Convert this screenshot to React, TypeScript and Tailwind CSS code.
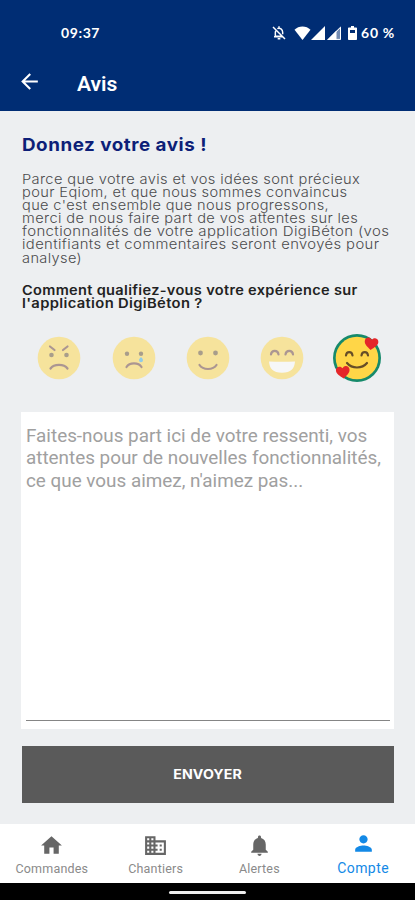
import { useState } from "react"
import type { ReactNode } from "react"
import clsx from "clsx"
import { MdArrowBack, MdBusiness, MdHome, MdNotifications, MdPerson } from "react-icons/md"

// Inter is narrower than the brand typeface, so each line is widened a little
const INTRO = [
  { text: "Parce que votre avis et vos idées sont précieux", stretch: "scale-x-[1.083]" },
  { text: "pour Eqiom, et que nous sommes convaincus", stretch: "scale-x-[1.083]" },
  { text: "que c'est ensemble que nous progressons,", stretch: "scale-x-[1.077]" },
  { text: "merci de nous faire part de vos attentes sur les", stretch: "scale-x-[1.083]" },
  { text: "fonctionnalités de votre application DigiBéton (vos", stretch: "scale-x-[1.108]" },
  { text: "identifiants et commentaires seront envoyés pour", stretch: "scale-x-[1.097]" },
  { text: "analyse)", stretch: "scale-x-[1.08]" },
]

const QUESTION = [
  { text: "Comment qualifiez-vous votre expérience sur", stretch: "scale-x-[1.118]" },
  { text: "l'application DigiBéton ?", stretch: "scale-x-[1.135]" },
]

const TABS = [
  { label: "Commandes", Icon: MdHome },
  { label: "Chantiers", Icon: MdBusiness },
  { label: "Alertes", Icon: MdNotifications },
  { label: "Compte", Icon: MdPerson },
]

const HEART = "M0 5.5C-3 3-6.2 .8-6.2-2.2C-6.2-4.3-4.8-5.6-3-5.6C-1.7-5.6-.6-4.9 0-3.8C.6-4.9 1.7-5.6 3-5.6C4.8-5.6 6.2-4.3 6.2-2.2C6.2 .8 3 3 0 5.5Z"

const FACES: { name: string; drawing: ReactNode }[] = [
  {
    name: "En colère",
    drawing: (
      <>
        <path d="M-9-11.5L-4.5-8M8.5-11.5L4-8" />
        <circle cx="-7.5" cy="-3" r="2.3" fill="#664E27" stroke="none" />
        <circle cx="7.5" cy="-3" r="2.3" fill="#664E27" stroke="none" />
        <path d="M-8.5 10.5C-5 5.6 5 5.6 8.5 10.5" />
      </>
    ),
  },
  {
    name: "Triste",
    drawing: (
      <>
        <circle cx="-7" cy="-4.3" r="2.2" fill="#664E27" stroke="none" />
        <circle cx="7" cy="-4.3" r="2.2" fill="#664E27" stroke="none" />
        <path d="M-7.5 9C-4.5 4.2 4.5 4.2 7.5 9" />
        <path d="M7-1C8.3 .6 9 1.3 9 2.3A2 2 0 0 1 5 2.3C5 1.3 5.7 .6 7-1Z" fill="#3AAADD" stroke="none" />
      </>
    ),
  },
  {
    name: "Content",
    drawing: (
      <>
        <circle cx="-7.5" cy="-5" r="2.4" fill="#664E27" stroke="none" />
        <circle cx="7.5" cy="-5" r="2.4" fill="#664E27" stroke="none" />
        <path d="M-8.5 7C-5 12.3 5 12.3 8.5 7" />
      </>
    ),
  },
  {
    name: "Très content",
    drawing: (
      <>
        <path d="M-11-3.5C-10.5-8.3-4-8.3-3.5-3.5M3.5-3.5C4-8.3 10.5-8.3 11-3.5" />
        <path d="M-13 3.5Q0 4 13 3.5C12.5 10.5 9 14.800 0 14.800S-12.5 10.5-13 3.5Z" fill="#fff" stroke="none" />
      </>
    ),
  },
  {
    name: "Ravi",
    drawing: (
      <>
        <path d="M-11-2.5C-10.5-7-5-7-4.5-2.5M4.5-2.5C5-7 10.5-7 11-2.5" />
        <path d="M-10 5C-5 11 5 11 10 5" />
        <path d={HEART} transform="translate(14.3 -14) rotate(6) scale(1.1)" fill="#E52629" stroke="none" />
        <path d={HEART} transform="translate(-14 14.5) rotate(-6) scale(1.1)" fill="#E52629" stroke="none" />
      </>
    ),
  },
]

function StatusBar() {
  return (
    <div className="flex h-[65px] items-end justify-between pr-5 pl-[61px] font-['Lato',sans-serif] text-[14px] leading-4 font-bold text-white">
      <span className="mb-[24px] tracking-[0.6px]">09:37</span>
      <div className="mb-[24px] flex items-center">
        <svg className="mr-[7px] h-4 w-4" viewBox="0 0 24 24" fill="none" stroke="currentColor" strokeWidth="2.2">
          <path d="M3 3l18 18M7.5 8C6.8 9 6.5 10 6.5 11.500V17H17M4.500 17.500H17M9.500 5.500C13.500 3.500 17.500 6.500 17.500 11V14M12 2v3M10 20.500h4" />
        </svg>
        <svg className="h-[14px] w-[17px]" viewBox="0 0 17 14" fill="currentColor">
          <path d="M8.500 14L.5 3.800C4.500-.7 12.500-.7 16.500 3.800Z" />
        </svg>
        <svg className="h-[14px] w-[14px]" viewBox="0 0 14 14" fill="currentColor">
          <path d="M0 14L14 0V14Z" />
        </svg>
        <svg className="ml-[2px] h-[14px] w-[14px]" viewBox="0 0 14 14" fill="currentColor">
          <path d="M0 14L14 0V14Z" opacity="0.45" />
          <path d="M0 14L9.500 4.500V14Z" />
          <path d="M1.500 13.400L13.500 1.300V13.400Z" fill="none" stroke="currentColor" />
        </svg>
        <svg className="mr-1 ml-[7px] h-[14px] w-[9px]" viewBox="0 0 9 14">
          <path d="M3 0h3v1.500h2.200q.8 0 .8.8v10.900q0 .8-.8.8H.8Q0 14 0 13.200V2.300Q0 1.500.8 1.500H3Z" fill="currentColor" />
          <path d="M2 4h5v3H2Z" fill="#002d74" />
        </svg>
        <span className="tracking-[0.7px] whitespace-nowrap">60 %</span>
      </div>
    </div>
  )
}

function Face({ drawing, selected }: { drawing: ReactNode; selected: boolean }) {
  return (
    <svg
      className={clsx("h-[50px] w-[50px]", !selected && "opacity-50")}
      viewBox="-25 -25 50 50"
      fill="none"
      stroke={selected ? "#664E27" : "#6b3f35"}
      strokeWidth="2.2"
      strokeLinecap="round"
    >
      {selected && <circle r="24" fill="#168a6b" stroke="none" />}
      <circle r="21.3" fill={selected ? "#FFD647" : "#FFD84A"} stroke="none" />
      {drawing}
    </svg>
  )
}

export default function App() {
  const [rating, setRating] = useState(4)
  const [comment, setComment] = useState("")
  const [tab, setTab] = useState("Compte")

  return (
    <div className="flex h-[900px] w-[415px] flex-col overflow-hidden bg-[#edeff1] font-['Inter',sans-serif]">
      <header className="h-[111px] shrink-0 bg-[#002d74]">
        <StatusBar />
        <div className="flex h-[36px] items-center pl-[17px] text-white">
          <button type="button" aria-label="Retour" className="mb-[3px]">
            <MdArrowBack className="h-[25px] w-[25px]" />
          </button>
          <h1 className="mt-[3px] ml-[35px] font-['Roboto',sans-serif] text-[21px] font-semibold">Avis</h1>
        </div>
      </header>

      <main className="flex min-h-0 flex-1 flex-col pr-[21px] pl-[22px]">
        <h2 className="mt-[22px] origin-left scale-x-[1.045] text-[18px] leading-6 font-bold tracking-[0.5px] whitespace-nowrap text-[#0d1f78]">
          Donnez votre avis !
        </h2>

        <p className="mt-4 text-[13.5px] leading-[13.1px] font-light tracking-[0.35px] text-[#4b4b4d]">
          {INTRO.map((line) => (
            <span key={line.text} className={clsx("block origin-left whitespace-nowrap", line.stretch)}>{line.text}</span>
          ))}
        </p>

        <p className="mt-[19px] text-[13px] leading-[13px] font-semibold tracking-[0.3px] text-[#222]">
          {QUESTION.map((line) => (
            <span key={line.text} className={clsx("block origin-left whitespace-nowrap", line.stretch)}>{line.text}</span>
          ))}
        </p>

        <div className="mt-[23px] grid grid-cols-5">
          {FACES.map((face, i) => (
            <button
              key={face.name}
              type="button"
              aria-label={face.name}
              onClick={() => setRating(i)}
              className="flex justify-center"
            >
              <Face drawing={face.drawing} selected={rating === i} />
            </button>
          ))}
        </div>

        <div className="mt-[29px] -ml-px flex h-[317px] shrink-0 flex-col bg-white pt-[13px] pr-1 pb-2 pl-[5px]">
          <textarea
            value={comment}
            onChange={(e) => setComment(e.target.value)}
            placeholder="Faites-nous part ici de votre ressenti, vos attentes pour de nouvelles fonctionnalités, ce que vous aimez, n'aimez pas..."
            className="block w-full flex-1 resize-none overflow-hidden border-b border-[#858585] font-['Roboto',sans-serif] text-[18.87px] leading-[22.5px] text-[#333] outline-none placeholder:text-[#a0a0a0]"
          />
        </div>

        <button
          type="button"
          className="mt-[17px] h-[57px] shrink-0 bg-[#5a5a5a] pt-0.5 text-[13px] font-bold text-white"
        >
          <span className="inline-block scale-x-[1.09] tracking-[0.1px]">ENVOYER</span>
        </button>
      </main>

      <nav className="grid h-[59px] shrink-0 grid-cols-4 bg-white font-['Roboto',sans-serif]">
        {TABS.map(({ label, Icon }) => {
          const active = tab === label
          return (
            <button
              key={label}
              type="button"
              onClick={() => setTab(label)}
              className={clsx(
                "flex flex-col items-center",
                active ? "pt-[7px] text-[14px] text-[#1389e6]" : "pt-[9px] text-[12.5px] text-[#8a8a8a]"
              )}
            >
              <Icon className={clsx("h-[25px] w-[25px]", !active && "text-[#666]")} />
              <span className={clsx("leading-4", active ? "mt-1 tracking-[0.45px]" : "mt-[3px] tracking-[0.2px]")}>{label}</span>
            </button>
          )
        })}
      </nav>

      <div className="flex h-[17px] shrink-0 justify-center bg-black pt-2">
        <div className="h-[3px] w-[77px] rounded-full bg-[#eee]" />
      </div>
    </div>
  )
}
